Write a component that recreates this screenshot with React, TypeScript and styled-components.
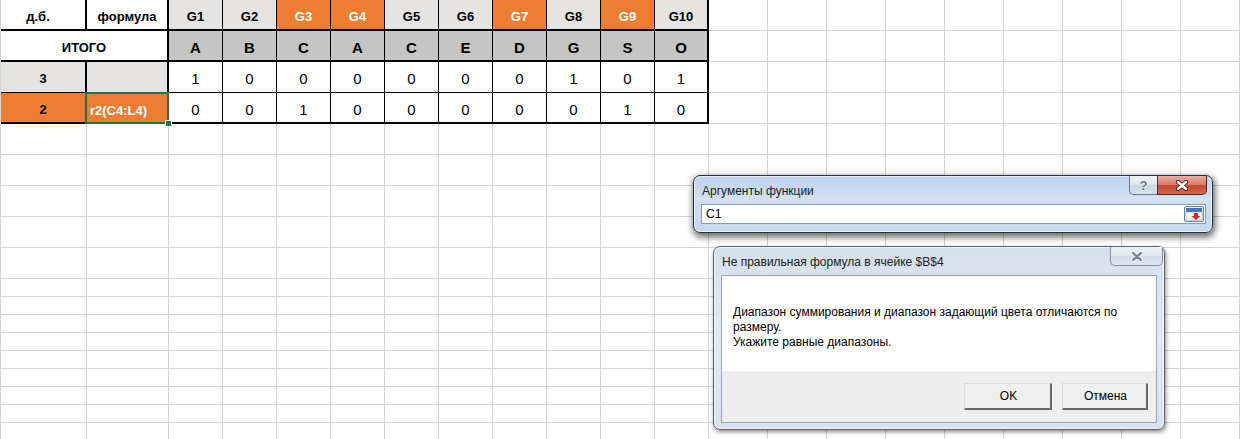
import styled, { createGlobalStyle } from "styled-components";

type Edge = "grid" | "thin" | "thick";

const ORANGE = "#ed7d31";
const LIGHT = "#e6e3e3";
const GRAY = "#c6c5c5";
const GRID = "#d2d5d2";
const FONT = `"Liberation Sans", Arial, sans-serif`;

const edge = (e?: Edge) =>
  e === "thick" ? "2px solid #000" : e === "thin" ? "1px solid #000" : `1px solid ${GRID}`;

//#region CSS styles
const GlobalStyle = createGlobalStyle`
  body {
    margin: 0;
    background: #fff;
    font-family: ${FONT};
    overflow: hidden;
  }
`;

const Page = styled.div`
  position: relative;
  width: 1240px;
  height: 439px;
  overflow: hidden;
  background: #fff;
`;

const Sheet = styled.div`
  display: grid;
  grid-template-columns: 86px 82px repeat(10, 54px) repeat(9, 59px);
  grid-template-rows: repeat(9, 31px) repeat(9, 18px);
  border-left: 1px solid ${GRID};
`;

const Cell = styled.div<{
  $bg?: string;
  $fg?: string;
  $bold?: boolean;
  $size?: number;
  $right?: Edge;
  $bottom?: Edge;
  $span?: number;
  $shift?: number;
}>`
  box-sizing: border-box;
  display: flex;
  align-items: center;
  justify-content: center;
  padding-top: 3px;
  padding-right: ${(p) => p.$shift ?? 0}px;
  grid-column: span ${(p) => p.$span ?? 1};
  background: ${(p) => p.$bg ?? "#fff"};
  color: ${(p) => p.$fg ?? "#000"};
  font-weight: ${(p) => (p.$bold ? 700 : 400)};
  font-size: ${(p) => p.$size ?? 13}px;
  border-right: ${(p) => edge(p.$right)};
  border-bottom: ${(p) => edge(p.$bottom)};
  white-space: nowrap;
`;

const SelectedCell = styled(Cell)`
  position: relative;
  justify-content: flex-start;
  align-items: flex-end;
  padding: 0 0 4px 3px;

  &::after {
    content: "";
    position: absolute;
    inset: -1px -2px -2px -2px;
    border: 2px solid #217346;
    pointer-events: none;
  }

  &::before {
    content: "";
    position: absolute;
    right: -5px;
    bottom: -5px;
    width: 5px;
    height: 5px;
    background: #217346;
    border: 1px solid #fff;
    z-index: 2;
  }
`;

const Window = styled.div<{ $active?: boolean }>`
  position: absolute;
  box-sizing: border-box;
  display: flex;
  flex-direction: column;
  border: 1px solid ${(p) => (p.$active ? "#27313d" : "#59636f")};
  border-radius: 7px;
  background: ${(p) =>
    p.$active
      ? "linear-gradient(180deg, #bcd1ec 0%, #d2e1f3 40%, #c3d7ef 100%)"
      : "linear-gradient(180deg, #d5e0ed 0%, #e1e9f2 50%, #d9e3ee 100%)"};
  box-shadow: ${(p) =>
    p.$active
      ? "inset 0 0 0 1px rgba(255,255,255,0.65), 1px 3px 7px 1px rgba(0,0,0,0.6)"
      : "inset 0 0 0 1px rgba(255,255,255,0.65), 1px 2px 4px rgba(0,0,0,0.45)"};
  font-family: ${FONT};
  font-size: 12px;
  color: #1b1b1b;
`;

const ArgsWindow = styled(Window)`
  left: 693px;
  top: 175px;
  width: 520px;
  height: 58px;
  z-index: 3;
`;

const MsgWindow = styled(Window)`
  left: 713px;
  top: 246px;
  width: 452px;
  height: 184px;
  z-index: 2;
`;

const TitleBar = styled.div`
  display: flex;
  align-items: flex-start;
  height: 28px;
`;

const Title = styled.div`
  flex: 1;
  padding: 8px 0 0 8px;
  line-height: 14px;
  color: #202020;
`;

const CaptionGroup = styled.div<{ $gap: number }>`
  display: flex;
  margin-right: ${(p) => p.$gap}px;
`;

const HelpButton = styled.div`
  width: 27px;
  height: 18px;
  display: flex;
  align-items: center;
  justify-content: center;
  border: 1px solid #6b7b91;
  border-top: none;
  border-right: none;
  border-radius: 0 0 0 5px;
  background: linear-gradient(180deg, #eef3f8 0%, #dde6f0 50%, #cbd7e6 51%, #d8e2ee 100%);
  color: #6a7585;
  font-weight: 700;
  font-size: 13px;
  text-shadow: 0 0 2px #fff, 0 0 1px #fff;
`;

const CloseButton = styled.div<{ $active?: boolean; $width: number }>`
  width: ${(p) => p.$width}px;
  height: 18px;
  display: flex;
  align-items: center;
  justify-content: center;
  border: 1px solid ${(p) => (p.$active ? "#5a231b" : "#8490a0")};
  border-top: none;
  border-radius: ${(p) => (p.$active ? "0 0 5px 0" : "0 0 5px 5px")};
  background: ${(p) =>
    p.$active
      ? "linear-gradient(180deg, #eab0a4 0%, #d77c69 48%, #c24a33 52%, #d0664e 100%)"
      : "linear-gradient(180deg, #eef2f7 0%, #dfe6ef 50%, #d3dce8 51%, #dde5ef 100%)"};
`;

const ArgsBody = styled.div`
  padding: 0 6px 0 7px;
`;

const RefInput = styled.div`
  box-sizing: border-box;
  height: 20px;
  display: flex;
  align-items: center;
  justify-content: space-between;
  padding: 0 1px 0 4px;
  border: 1px solid #8c9bb0;
  background: #fff;
  color: #000;
`;

const Panel = styled.div`
  box-sizing: border-box;
  height: 148px;
  margin: 0 7px;
  display: flex;
  flex-direction: column;
  border: 1px solid #95a4b8;
  background: #fff;
`;

const Message = styled.div`
  flex: 1;
  padding: 29px 12px 0 11px;
  line-height: 15px;
  color: #000;
`;

const Footer = styled.div`
  height: 51px;
  display: flex;
  justify-content: flex-end;
  gap: 10px;
  padding: 12px 8px 0 0;
  box-sizing: border-box;
  background: #eeeeee;
`;

const DialogButton = styled.div<{ $width: number }>`
  box-sizing: border-box;
  width: ${(p) => p.$width}px;
  height: 27px;
  display: flex;
  align-items: center;
  justify-content: center;
  padding-left: 2px;
  background: #efefef;
  border-top: 1px solid #dcdcdc;
  border-left: 1px solid #dcdcdc;
  border-right: 2px solid #6a6a6a;
  border-bottom: 2px solid #6a6a6a;
  color: #000;
  font-size: 12px;
`;
//#endregion

function CloseGlyph({ light }: { light?: boolean }) {
  const outer = light ? "#ffffff" : "#4a1f18";
  const inner = light ? "#7d8794" : "#ffffff";
  return (
    <svg width="14" height="11" viewBox="0 0 14 11">
      <path d="M3 2 L11 9 M11 2 L3 9" stroke={outer} strokeWidth="4.2" strokeLinecap="round" />
      <path d="M3 2 L11 9 M11 2 L3 9" stroke={inner} strokeWidth="2.4" strokeLinecap="round" />
    </svg>
  );
}

function RefEditIcon() {
  return (
    <svg width="20" height="16" viewBox="0 0 20 16">
      <rect x="0.5" y="0.5" width="19" height="15" rx="1.5" fill="#e9eef5" stroke="#6f7f95" />
      <rect x="2" y="2" width="16" height="4" fill="#3d72c4" />
      <rect x="2" y="6" width="16" height="8" fill="#ffffff" stroke="#8aa0c0" strokeWidth="0.6" />
      <path d="M10 7 h4 v3 h2.5 l-4.5 4 l-4.5 -4 h2.5 z" fill="#d9261c" />
    </svg>
  );
}

const HEADERS = ["G1", "G2", "G3", "G4", "G5", "G6", "G7", "G8", "G9", "G10"];
const ORANGE_COLS = new Set([2, 3, 6, 8]);
const LETTERS = ["A", "B", "C", "A", "C", "E", "D", "G", "S", "O"];
const ROW3 = [1, 0, 0, 0, 0, 0, 0, 1, 0, 1];
const ROW4 = [0, 0, 1, 0, 0, 0, 0, 0, 1, 0];
const EXTRA_COLS = 9;
const EMPTY_ROWS = 14;
const TOTAL_COLS = 21;

const lastEdge = (i: number): Edge => (i === 9 ? "thick" : "thin");

function Empties({ count, prefix }: { count: number; prefix: string }) {
  return (
    <>
      {Array.from({ length: count }, (_, i) => (
        <Cell key={`${prefix}-${i}`} />
      ))}
    </>
  );
}

export default function App() {
  return (
    <Page>
      <GlobalStyle />
      <Sheet>
        {/* row 1 */}
        <Cell $bold $right="thick" $bottom="thick" $shift={10}>
          д.б.
        </Cell>
        <Cell $bold $right="thick" $bottom="thick">
          формула
        </Cell>
        {HEADERS.map((h, i) => (
          <Cell
            key={h}
            $bold
            $bg={ORANGE_COLS.has(i) ? ORANGE : LIGHT}
            $fg={ORANGE_COLS.has(i) ? "#fff" : "#000"}
            $right={lastEdge(i)}
            $bottom="thick"
          >
            {h}
          </Cell>
        ))}
        <Empties count={EXTRA_COLS} prefix="r1" />

        {/* row 2 */}
        <Cell $span={2} $bold $right="thick" $bottom="thick">
          ИТОГО
        </Cell>
        {LETTERS.map((l, i) => (
          <Cell key={`l${i}`} $bold $size={15} $bg={GRAY} $right={lastEdge(i)} $bottom="thick">
            {l}
          </Cell>
        ))}
        <Empties count={EXTRA_COLS} prefix="r2" />

        {/* row 3 */}
        <Cell $bold $bg={LIGHT} $right="thick" $bottom="thin">
          3
        </Cell>
        <Cell $bg={LIGHT} $right="thick" $bottom="thin" />
        {ROW3.map((n, i) => (
          <Cell key={`a${i}`} $size={15} $right={lastEdge(i)} $bottom="thin">
            {n}
          </Cell>
        ))}
        <Empties count={EXTRA_COLS} prefix="r3" />

        {/* row 4 */}
        <Cell $bold $bg={ORANGE} $right="thick" $bottom="thick">
          2
        </Cell>
        <SelectedCell $bold $bg={ORANGE} $fg="#fff" $right="thick" $bottom="thick">
          r2(C4:L4)
        </SelectedCell>
        {ROW4.map((n, i) => (
          <Cell key={`b${i}`} $size={15} $right={lastEdge(i)} $bottom="thick">
            {n}
          </Cell>
        ))}
        <Empties count={EXTRA_COLS} prefix="r4" />

        <Empties count={EMPTY_ROWS * TOTAL_COLS} prefix="rest" />
      </Sheet>

      <ArgsWindow $active>
        <TitleBar>
          <Title>Аргументы функции</Title>
          <CaptionGroup $gap={5}>
            <HelpButton>?</HelpButton>
            <CloseButton $active $width={48}>
              <CloseGlyph />
            </CloseButton>
          </CaptionGroup>
        </TitleBar>
        <ArgsBody>
          <RefInput>
            <span>C1</span>
            <RefEditIcon />
          </RefInput>
        </ArgsBody>
      </ArgsWindow>

      <MsgWindow>
        <TitleBar>
          <Title>Не правильная формула в ячейке $B$4</Title>
          <CaptionGroup $gap={1}>
            <CloseButton $width={51}>
              <CloseGlyph light />
            </CloseButton>
          </CaptionGroup>
        </TitleBar>
        <Panel>
          <Message>
            Диапазон суммирования и диапазон задающий цвета отличаются по
            <br />
            размеру.
            <br />
            Укажите равные диапазоны.
          </Message>
          <Footer>
            <DialogButton $width={88}>OK</DialogButton>
            <DialogButton $width={86}>Отмена</DialogButton>
          </Footer>
        </Panel>
      </MsgWindow>
    </Page>
  );
}
